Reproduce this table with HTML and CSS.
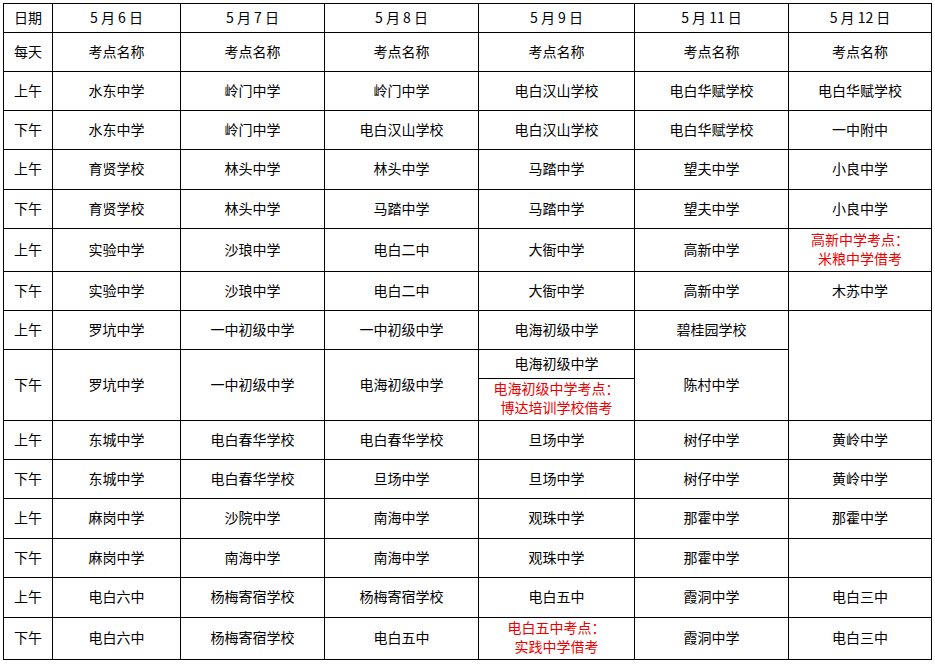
FILE: index.html
```html
<!DOCTYPE html>
<html lang="zh-CN">
<head>
<meta charset="utf-8">
<title>考点安排表</title>
<link rel="stylesheet" href="styles.css">
</head>
<body>
<table class="schedule">
  <colgroup>
    <col class="c-label">
    <col class="c-d6">
    <col class="c-d7">
    <col class="c-d8">
    <col class="c-d9">
    <col class="c-d11">
    <col class="c-d12">
  </colgroup>
  <tbody>
    <tr class="h29"><td>日期</td><td>5 月 6 日</td><td>5 月 7 日</td><td>5 月 8 日</td><td>5 月 9 日</td><td>5 月 11 日</td><td>5 月 12 日</td></tr>
    <tr class="h39"><td>每天</td><td>考点名称</td><td>考点名称</td><td>考点名称</td><td>考点名称</td><td>考点名称</td><td>考点名称</td></tr>
    <tr class="h39"><td>上午</td><td>水东中学</td><td>岭门中学</td><td>岭门中学</td><td>电白汉山学校</td><td>电白华赋学校</td><td>电白华赋学校</td></tr>
    <tr class="h39"><td>下午</td><td>水东中学</td><td>岭门中学</td><td>电白汉山学校</td><td>电白汉山学校</td><td>电白华赋学校</td><td>一中附中</td></tr>
    <tr class="h40"><td>上午</td><td>育贤学校</td><td>林头中学</td><td>林头中学</td><td>马踏中学</td><td>望夫中学</td><td>小良中学</td></tr>
    <tr class="h39"><td>下午</td><td>育贤学校</td><td>林头中学</td><td>马踏中学</td><td>马踏中学</td><td>望夫中学</td><td>小良中学</td></tr>
    <tr class="h43"><td>上午</td><td>实验中学</td><td>沙琅中学</td><td>电白二中</td><td>大衙中学</td><td>高新中学</td><td class="note">高新中学考点：<br>米粮中学借考</td></tr>
    <tr class="h39"><td>下午</td><td>实验中学</td><td>沙琅中学</td><td>电白二中</td><td>大衙中学</td><td>高新中学</td><td>木苏中学</td></tr>
    <tr class="h39"><td>上午</td><td>罗坑中学</td><td>一中初级中学</td><td>一中初级中学</td><td>电海初级中学</td><td>碧桂园学校</td><td rowspan="3"></td></tr>
    <tr class="h29"><td rowspan="2">下午</td><td rowspan="2">罗坑中学</td><td rowspan="2">一中初级中学</td><td rowspan="2">电海初级中学</td><td>电海初级中学</td><td rowspan="2">陈村中学</td></tr>
    <tr class="h42"><td class="note">电海初级中学考点：<br>博达培训学校借考</td></tr>
    <tr class="h39"><td>上午</td><td>东城中学</td><td>电白春华学校</td><td>电白春华学校</td><td>旦场中学</td><td>树仔中学</td><td>黄岭中学</td></tr>
    <tr class="h39"><td>下午</td><td>东城中学</td><td>电白春华学校</td><td>旦场中学</td><td>旦场中学</td><td>树仔中学</td><td>黄岭中学</td></tr>
    <tr class="h40"><td>上午</td><td>麻岗中学</td><td>沙院中学</td><td>南海中学</td><td>观珠中学</td><td>那霍中学</td><td>那霍中学</td></tr>
    <tr class="h39"><td>下午</td><td>麻岗中学</td><td>南海中学</td><td>南海中学</td><td>观珠中学</td><td>那霍中学</td><td></td></tr>
    <tr class="h40"><td>上午</td><td>电白六中</td><td>杨梅寄宿学校</td><td>杨梅寄宿学校</td><td>电白五中</td><td>霞洞中学</td><td>电白三中</td></tr>
    <tr class="h42"><td>下午</td><td>电白六中</td><td>杨梅寄宿学校</td><td>电白五中</td><td class="note">电白五中考点：<br>实践中学借考</td><td>霞洞中学</td><td>电白三中</td></tr>
  </tbody>
</table>
</body>
</html>
```

FILE: styles.css
```css
html, body {
  margin: 0;
  padding: 0;
  background: #ffffff;
}

body {
  padding: 3px 0 0 3px;
  font-family: "Noto Sans CJK SC", "Noto Sans", sans-serif;
  font-size: 14px;
  color: #000000;
}

.schedule {
  border-collapse: collapse;
  table-layout: fixed;
  width: 929px;
}

.c-label { width: 49px; }
.c-d6 { width: 128px; }
.c-d7 { width: 144px; }
.c-d8 { width: 154px; }
.c-d9 { width: 156px; }
.c-d11 { width: 154px; }
.c-d12 { width: 143px; }

.schedule td {
  border: 1px solid #000000;
  padding: 0 0 3px 0;
  text-align: center;
  vertical-align: middle;
  line-height: 20px;
  white-space: nowrap;
}

.schedule .note {
  color: #ee0000;
  line-height: 19px;
}

.h29 { height: 29px; }
.h39 { height: 39px; }
.h40 { height: 40px; }
.h42 { height: 42px; }
.h43 { height: 43px; }
```
